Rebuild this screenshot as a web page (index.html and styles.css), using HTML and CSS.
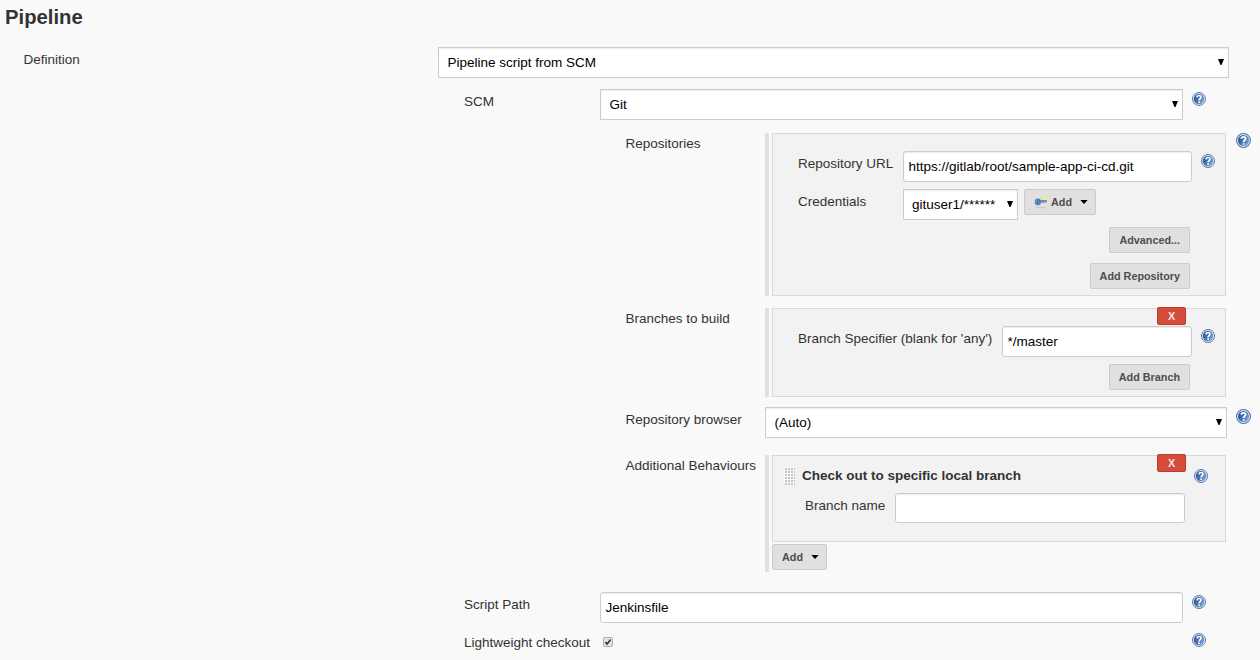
FILE: index.html
```html
<!DOCTYPE html>
<html lang="en">
<head>
<meta charset="utf-8">
<title>Pipeline</title>
<link rel="stylesheet" href="styles.css">
</head>
<body>
<svg class="defs" width="0" height="0" aria-hidden="true">
  <defs>
    <linearGradient id="help-fill" x1="0" y1="0" x2="1" y2="0.6">
      <stop offset="0" stop-color="#1f4884"/>
      <stop offset="0.5" stop-color="#4470ac"/>
      <stop offset="1" stop-color="#7ba1d2"/>
    </linearGradient>
    <symbol id="help" viewBox="0 0 16 16">
      <circle cx="8" cy="8" r="7.4" fill="#e8eef6" stroke="#4a71a7" stroke-width="1.1"/>
      <circle cx="8" cy="8" r="5.9" fill="url(#help-fill)"/>
      <path d="M5.7 6.2C5.9 3.3 10.3 3.4 10.2 6C10.1 7.6 8.1 7.6 8.1 9.6M8.1 10.8V12.6" fill="none" stroke="#fff" stroke-width="1.9"/>
    </symbol>
    <symbol id="arrow" viewBox="0 0 6 6">
      <path d="M0 0H6L3.5 6H2.5Z" fill="#000"/>
    </symbol>
    <symbol id="caret" viewBox="0 0 8 4">
      <path d="M0.3 0H7.7L4 4Z" fill="#000"/>
    </symbol>
  </defs>
</svg>
<main class="page">
  <h1 class="title">Pipeline</h1>

  <div class="row row-definition">
    <label class="label">Definition</label>
    <div class="select"><span>Pipeline script from SCM</span><svg class="arrow"><use href="#arrow"/></svg></div>
  </div>

  <div class="row row-scm">
    <label class="label">SCM</label>
    <div class="select"><span>Git</span><svg class="arrow"><use href="#arrow"/></svg></div>
    <svg class="help"><use href="#help"/></svg>
  </div>

  <div class="row nested row-repositories">
    <label class="label">Repositories</label>
    <div class="group">
      <div class="box box-repository">
        <div class="field">
          <label class="label">Repository URL</label>
          <div class="input">https://gitlab/root/sample-app-ci-cd.git</div>
          <svg class="help"><use href="#help"/></svg>
        </div>
        <div class="field field-credentials">
          <label class="label">Credentials</label>
          <div class="select"><span>gituser1/******</span><svg class="arrow"><use href="#arrow"/></svg></div>
          <button class="button button-key">
            <svg class="key" viewBox="0 0 14 14">
              <ellipse cx="6.5" cy="12.6" rx="5" ry="0.8" fill="#c9c9c9"/>
              <circle cx="10.5" cy="3.6" r="2.2" fill="#f3ed62"/>
              <path d="M5 5.1H12.8V7.3L11.8 7.8L10.7 7.2L9.6 8L8.4 7.4H5Z" fill="#6591ca"/>
              <ellipse cx="3.9" cy="6.9" rx="3.1" ry="3.3" fill="#517eb9"/>
              <circle cx="2.4" cy="6.6" r="0.8" fill="#7ba3d6"/>
            </svg>
            <span>Add</span><svg class="caret"><use href="#caret"/></svg>
          </button>
        </div>
        <div class="actions">
          <button class="button">Advanced...</button>
          <button class="button">Add Repository</button>
        </div>
      </div>
    </div>
    <svg class="help help-outer"><use href="#help"/></svg>
  </div>

  <div class="row nested row-branches">
    <label class="label">Branches to build</label>
    <div class="group">
      <div class="box box-branch">
        <button class="delete">X</button>
        <div class="field">
          <label class="label">Branch Specifier (blank for 'any')</label>
          <div class="input">*/master</div>
          <svg class="help"><use href="#help"/></svg>
        </div>
        <div class="actions">
          <button class="button">Add Branch</button>
        </div>
      </div>
    </div>
  </div>

  <div class="row nested row-browser">
    <label class="label">Repository browser</label>
    <div class="select"><span>(Auto)</span><svg class="arrow"><use href="#arrow"/></svg></div>
    <svg class="help help-outer"><use href="#help"/></svg>
  </div>

  <div class="row nested row-behaviours">
    <label class="label">Additional Behaviours</label>
    <div class="group">
      <div class="box box-behaviour">
        <button class="delete">X</button>
        <div class="behaviour-head">
          <span class="grip"></span>
          <b class="behaviour-title">Check out to specific local branch</b>
          <svg class="help"><use href="#help"/></svg>
        </div>
        <div class="behaviour-field">
          <label class="label">Branch name</label>
          <div class="input"></div>
        </div>
      </div>
      <button class="button button-add"><span>Add</span><svg class="caret"><use href="#caret"/></svg></button>
    </div>
  </div>

  <div class="row row-scm row-script">
    <label class="label">Script Path</label>
    <div class="input">Jenkinsfile</div>
    <svg class="help"><use href="#help"/></svg>
  </div>

  <div class="row row-scm row-light">
    <label class="label">Lightweight checkout</label>
    <div class="check-cell">
      <svg class="checkbox" viewBox="0 0 11 11">
        <rect x="0.5" y="0.5" width="10" height="10" rx="1.5" fill="#e4e4e4" stroke="#a6a6a6"/>
        <path d="M2.6 5.6L4.5 7.6L8.4 2.8" fill="none" stroke="#333" stroke-width="1.8"/>
      </svg>
    </div>
    <svg class="help"><use href="#help"/></svg>
  </div>
</main>
</body>
</html>
```
FILE: styles.css
```css
* { box-sizing: border-box; }

body {
  margin: 0;
  background: #f9f9f9;
  color: #333;
  font: 13.5px/16px "Liberation Sans", Arial, sans-serif;
}

.defs { display: block; }

.page {
  width: 1260px;
  height: 660px;
  overflow: hidden;
}

.title {
  height: 47px;
  margin: 0;
  padding: 5px 0 0 5px;
  font-size: 20.25px;
  line-height: 24px;
}

.row, .field, .behaviour-field, .behaviour-head {
  display: flex;
  align-items: flex-start;
}

.label {
  flex: none;
  padding-top: 5px;
  white-space: nowrap;
}

.select, .input {
  flex: none;
  display: flex;
  align-items: center;
  height: 31px;
  border: 1px solid #ccc;
  background: #fff;
  box-shadow: inset 0 1px 1px #ececec;
  color: #000;
  white-space: nowrap;
}

.select {
  justify-content: space-between;
  padding: 0 4px 0 8.5px;
}

.input {
  padding-left: 4.5px;
  border-radius: 3px;
}

.arrow { flex: none; width: 6px; height: 6px; margin-top: -2px; }
.caret { flex: none; width: 8px; height: 4px; }

.help {
  flex: none;
  width: 14px;
  height: 14px;
  margin: 2.5px 0 0 9px;
}

.help-outer {
  width: 15px;
  height: 15px;
  margin: 0 0 0 10px;
}

.row-definition { height: 42px; padding-left: 23.5px; }
.row-definition .label { width: 414.5px; }
.row-definition .select { width: 791px; }

.row-scm { height: 44px; padding-left: 464px; }
.row-scm > .label { width: 136px; }
.row-scm > .select, .row-scm > .input { width: 583px; }

.nested { padding-left: 625.5px; }
.nested > .label { width: 139.5px; padding-top: 3px; }

.group {
  width: 461px;
  padding-left: 3px;
  border-left: 4px solid #e0e0e0;
}

.box {
  position: relative;
  width: 454px;
  border: 1px solid #d9d9d9;
  background: #f2f2f2;
}

.row-repositories { height: 175px; }
.box-repository { height: 163px; padding: 17px 0 0 25px; }
.field { height: 38px; }
.field .help { margin-top: 3px; }
.box-repository .label { width: 105px; }
.box-repository .input { width: 289px; }
.field-credentials .select { width: 115px; padding-left: 8px; }

.button {
  display: flex;
  align-items: center;
  justify-content: center;
  height: 26px;
  padding: 0 9px;
  border: 1px solid #ccc;
  border-radius: 2px;
  background: #e0e0e0;
  color: #4d4d4d;
  font: bold 10.8px/16px "Liberation Sans", Arial, sans-serif;
  white-space: nowrap;
}

.button-key { width: 72px; margin-left: 6px; padding: 0 6px 0 9px; justify-content: flex-start; }
.key { flex: none; width: 14px; height: 14px; margin-right: 3px; }
.button .caret { margin-left: 8px; }

.actions {
  display: flex;
  flex-direction: column;
  align-items: flex-end;
  gap: 10px;
  padding-right: 35px;
}

.row-branches { height: 99px; }
.box-branch { height: 89px; padding: 17px 0 0 25px; }
.box-branch .label { width: 204px; }
.box-branch .input { width: 190px; }

.delete {
  position: absolute;
  top: -2px;
  right: 39px;
  width: 29px;
  height: 18px;
  padding: 0;
  border: 1px solid #bd3b2d;
  border-radius: 2px;
  background: #d54c3c;
  color: #f5e4e2;
  font: bold 10.8px/16px "Liberation Sans", Arial, sans-serif;
}

.row-browser { height: 48px; }
.row-browser > .label { padding-top: 5px; }
.row-browser > .select { width: 462px; }
.row-browser > .help { margin: 2px 0 0 9px; }

.row-behaviours { height: 137px; }
.row-behaviours .group { height: 117px; }
.box-behaviour { height: 87px; padding: 12px 0 0 11px; }
.behaviour-head { height: 25px; }
.behaviour-head .help { margin: 1px 0 0 0; }
.behaviour-title { width: 392px; }

.grip {
  flex: none;
  width: 11px;
  height: 18px;
  margin: -1px 7px 0 0;
  background-color: #fbfbfb;
  background-image:
    linear-gradient(90deg, transparent 2px, #fbfbfb 2px),
    linear-gradient(#c4c4c4 2px, transparent 2px);
  background-size: 3px 3px;
  background-position: 1px 1px;
}

.behaviour-field { padding-left: 21px; }
.behaviour-field .label { width: 90px; }
.behaviour-field .input { width: 290px; height: 30px; }

.button-add { width: 55px; margin-top: 2px; padding: 0 6px 0 9px; justify-content: flex-start; }

.row-script { height: 38px; }

.check-cell { width: 583px; padding: 7px 0 0 3px; }
.checkbox { display: block; width: 10px; height: 10px; }
```
